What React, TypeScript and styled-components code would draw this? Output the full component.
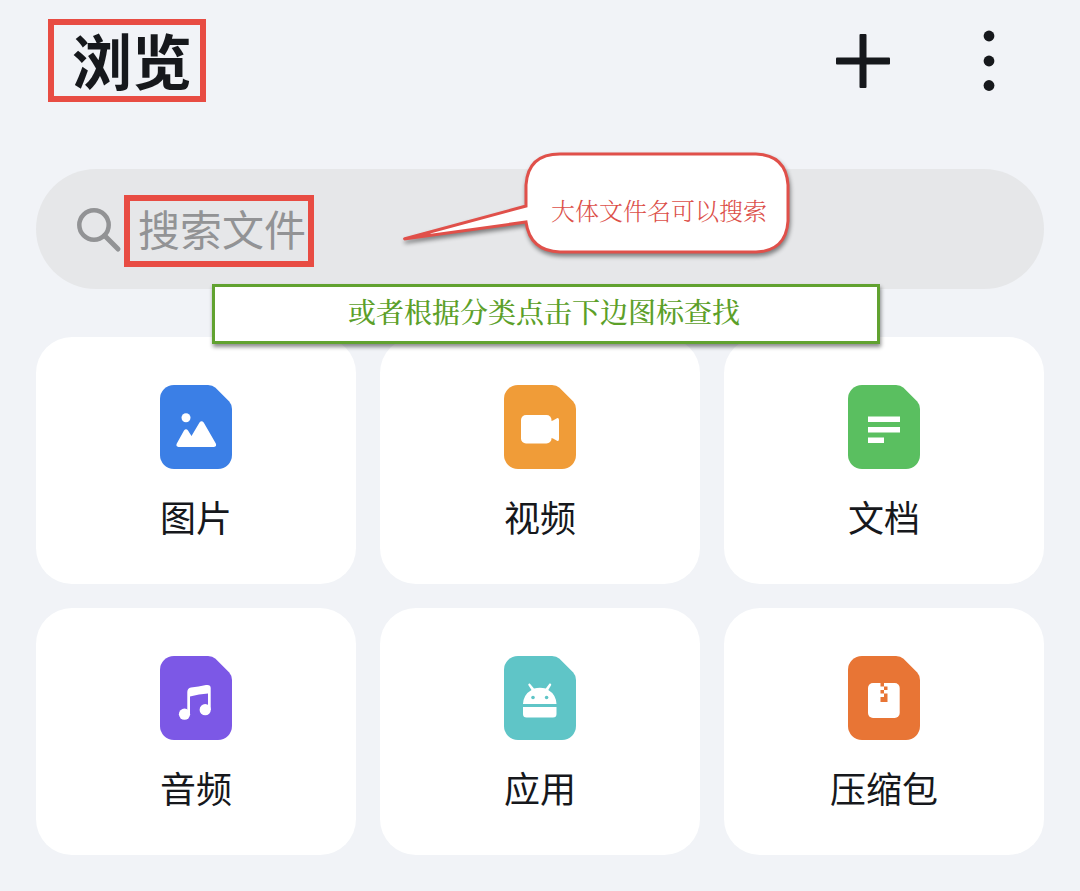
import React from 'react';
import styled, { createGlobalStyle } from 'styled-components';

const sans = `'Noto Sans CJK SC', 'Noto Sans', sans-serif`;
const serif = `'Liberation Serif', 'Noto Serif CJK SC', 'Noto Sans CJK SC', serif`;

const GlobalStyle = createGlobalStyle`
  *, *::before, *::after { box-sizing: border-box; }
  body { margin: 0; background: #f1f3f7; color: #16181c; font-family: ${sans}; }
`;

const Page = styled.main`
  padding: 19px 36px 36px;
`;

const Header = styled.header`
  display: flex;
  align-items: center;
  justify-content: space-between;
  padding: 0 20px 0 12px;
`;

const Title = styled.h1`
  margin: 0;
  padding: 0 8px 4px 18px;
  border: 6px solid #e84c43;
  font-size: 60px;
  line-height: 67px;
  font-weight: 700;
`;

const Actions = styled.div`
  display: flex;
  gap: 56px;
`;

const IconButton = styled.button`
  display: flex;
  align-items: center;
  justify-content: center;
  width: 70px;
  height: 70px;
  padding: 0;
  border: 0;
  background: none;
  color: #16181c;
`;

const SearchBar = styled.form`
  position: relative;
  display: flex;
  align-items: center;
  height: 120px;
  margin-top: 67px;
  padding: 4px 40px 0;
  border-radius: 60px;
  background: #e6e7e9;
`;

const SearchInput = styled.input`
  width: 190px;
  height: 72px;
  margin-left: 2px;
  padding: 0 0 8px 8px;
  border: 6px solid #e84c43;
  border-radius: 0;
  outline: 0;
  background: transparent;
  color: #16181c;
  font-family: ${sans};
  font-size: 42px;
  &::placeholder { color: #929395; opacity: 1; }
`;

const Callout = styled.aside`
  position: absolute;
  z-index: 1;
  top: -18px;
  left: 364px;
  width: 394px;
  height: 108px;
`;

const CalloutShape = styled.svg`
  position: absolute;
  inset: 0;
  overflow: visible;
  filter: drop-shadow(1px 3px 2px rgba(0, 0, 0, 0.45));
`;

const CalloutText = styled.p`
  position: relative;
  margin: 0;
  padding: 43px 0 0 124px;
  text-align: center;
  color: #dc4f49;
  font-family: ${serif};
  font-size: 24px;
  line-height: 36px;
  font-weight: 300;
  white-space: nowrap;
`;

const Categories = styled.section`
  position: relative;
  margin-top: 48px;
`;

const Banner = styled.p`
  position: absolute;
  z-index: 1;
  top: -53px;
  left: 176px;
  right: 164px;
  margin: 0;
  padding-right: 4px;
  border: 3px solid #61a230;
  background: #fff;
  box-shadow: 1px 3px 4px rgba(0, 0, 0, 0.45);
  color: #5ca029;
  font-family: ${serif};
  font-size: 28px;
  line-height: 54px;
  font-weight: 500;
  text-align: center;
`;

const Grid = styled.div`
  display: grid;
  grid-template-columns: repeat(3, 1fr);
  gap: 24px;
`;

const Card = styled.button`
  display: flex;
  flex-direction: column;
  align-items: center;
  gap: 22px;
  height: 247px;
  padding: 48px 0 0;
  border: 0;
  border-radius: 36px;
  background: #fff;
  color: #16181c;
  font-family: ${sans};
  font-size: 36px;
  line-height: 50px;
`;

const FileIcon = ({ color, children }: { color: string; children: React.ReactNode }) => (
  <svg width="72" height="84" viewBox="0 0 72 84" fill="#fff" aria-hidden="true">
    <path
      fill={color}
      d="M14 0H48Q52.500 0 55.500 2.800L69 16.200Q72 19.500 72 24V70A14 14 0 0 1 58 84H14A14 14 0 0 1 0 70V14A14 14 0 0 1 14 0Z"
    />
    {children}
  </svg>
);

const categories = [
  {
    label: '图片',
    color: '#3b7fe6',
    glyph: (
      <>
        <circle cx="26" cy="32.700" r="4.500" />
        <path d="M18.500 62Q15.500 61.500 16.800 58.500L24 45.500Q26 43 28 45.500L31.500 51L39.500 37.500Q41.500 35 43.700 37.500L55.800 58.500Q57 61.500 54 62Z" />
      </>
    ),
  },
  {
    label: '视频',
    color: '#f09c38',
    glyph: (
      <>
        <rect x="17" y="30" width="30.500" height="28.500" rx="5" />
        <path d="M46 36.500L49 35.500L53 33.200Q55 32.700 55 35V54Q55 56.500 53 55.700L49 53.500L46 52.500Z" />
      </>
    ),
  },
  {
    label: '文档',
    color: '#5abf60',
    glyph: <path d="M20 31.500H52V37H20ZM20 42H52V47.500H20ZM20 52.500H36V58H20Z" />,
  },
  {
    label: '音频',
    color: '#7c58e6',
    glyph: (
      <>
        <path d="M27.300 36Q27.300 32.200 31 31.400Q38.500 30.800 46 29Q50.700 28.300 50.700 32V54H48V37.500Q39 38 30 40.500V58H27.300Z" />
        <circle cx="24.500" cy="58.200" r="5.600" />
        <circle cx="45.200" cy="53.700" r="5.600" />
      </>
    ),
  },
  {
    label: '应用',
    color: '#5fc5c7',
    glyph: (
      <>
        <path d="M19 48Q19.500 38.500 27.500 34L24.300 29Q24 27.200 25.800 27.500L30 32.600Q36 30.800 41.800 32.600L45.500 27.500Q47.500 27 47.200 29L44.300 34Q52 38.500 52.500 48Z" />
        <path d="M19 51H52.500V58Q52.500 61.500 49 61.500H22.500Q19 61.500 19 58Z" />
        <circle cx="29" cy="41.500" r="1.800" fill="#5fc5c7" />
        <circle cx="42.600" cy="41.500" r="1.800" fill="#5fc5c7" />
      </>
    ),
  },
  {
    label: '压缩包',
    color: '#e87535',
    glyph: (
      <>
        <rect x="20" y="27" width="31.700" height="35" rx="5" />
        <path
          fill="#e87535"
          d="M32.500 27H36V30.500H32.500ZM36 30.500H39.500V34H36ZM32.500 34H36V37.500H32.500ZM36 37.500H39.500V46H32.500V41H36Z"
        />
      </>
    ),
  },
];

export default function App() {
  return (
    <>
      <GlobalStyle />
      <Page>
        <Header>
          <Title>浏览</Title>
          <Actions>
            <IconButton type="button" aria-label="新建">
              <svg width="54" height="54" viewBox="0 0 54 54" fill="currentColor">
                <rect x="23.500" width="7" height="54" rx="1" />
                <rect y="23.500" width="54" height="7" rx="1" />
              </svg>
            </IconButton>
            <IconButton type="button" aria-label="更多">
              <svg width="12" height="62" viewBox="0 0 12 62" fill="currentColor">
                <circle cx="6" cy="6" r="5.400" />
                <circle cx="6" cy="31" r="5.400" />
                <circle cx="6" cy="55.500" r="5.400" />
              </svg>
            </IconButton>
          </Actions>
        </Header>

        <SearchBar role="search">
          <svg width="46" height="46" viewBox="0 0 46 46" fill="none" stroke="#929395" aria-hidden="true">
            <circle cx="18" cy="17" r="14.700" strokeWidth="4.500" />
            <path d="M28.500 27.500L42 41" strokeWidth="5" strokeLinecap="round" />
          </svg>
          <SearchInput type="text" aria-label="搜索文件" placeholder="搜索文件" />
          <Callout>
            <CalloutShape width="394" height="108" viewBox="0 0 394 108" fill="#fff" stroke="#e0504a" strokeWidth="3">
              <path d="M126 55V34Q128 3 160 3H356Q386 4 388 34V70Q386 100 356 101H160Q130 100 126 71L4 88Z" />
              <path d="M3 88L30 80.500L30 84Z" fill="#e0504a" strokeWidth="1" />
            </CalloutShape>
            <CalloutText>大体文件名可以搜索</CalloutText>
          </Callout>
        </SearchBar>

        <Categories>
          <Banner>或者根据分类点击下边图标查找</Banner>
          <Grid>
            {categories.map(({ label, color, glyph }) => (
              <Card key={label} type="button">
                <FileIcon color={color}>{glyph}</FileIcon>
                {label}
              </Card>
            ))}
          </Grid>
        </Categories>
      </Page>
    </>
  );
}
